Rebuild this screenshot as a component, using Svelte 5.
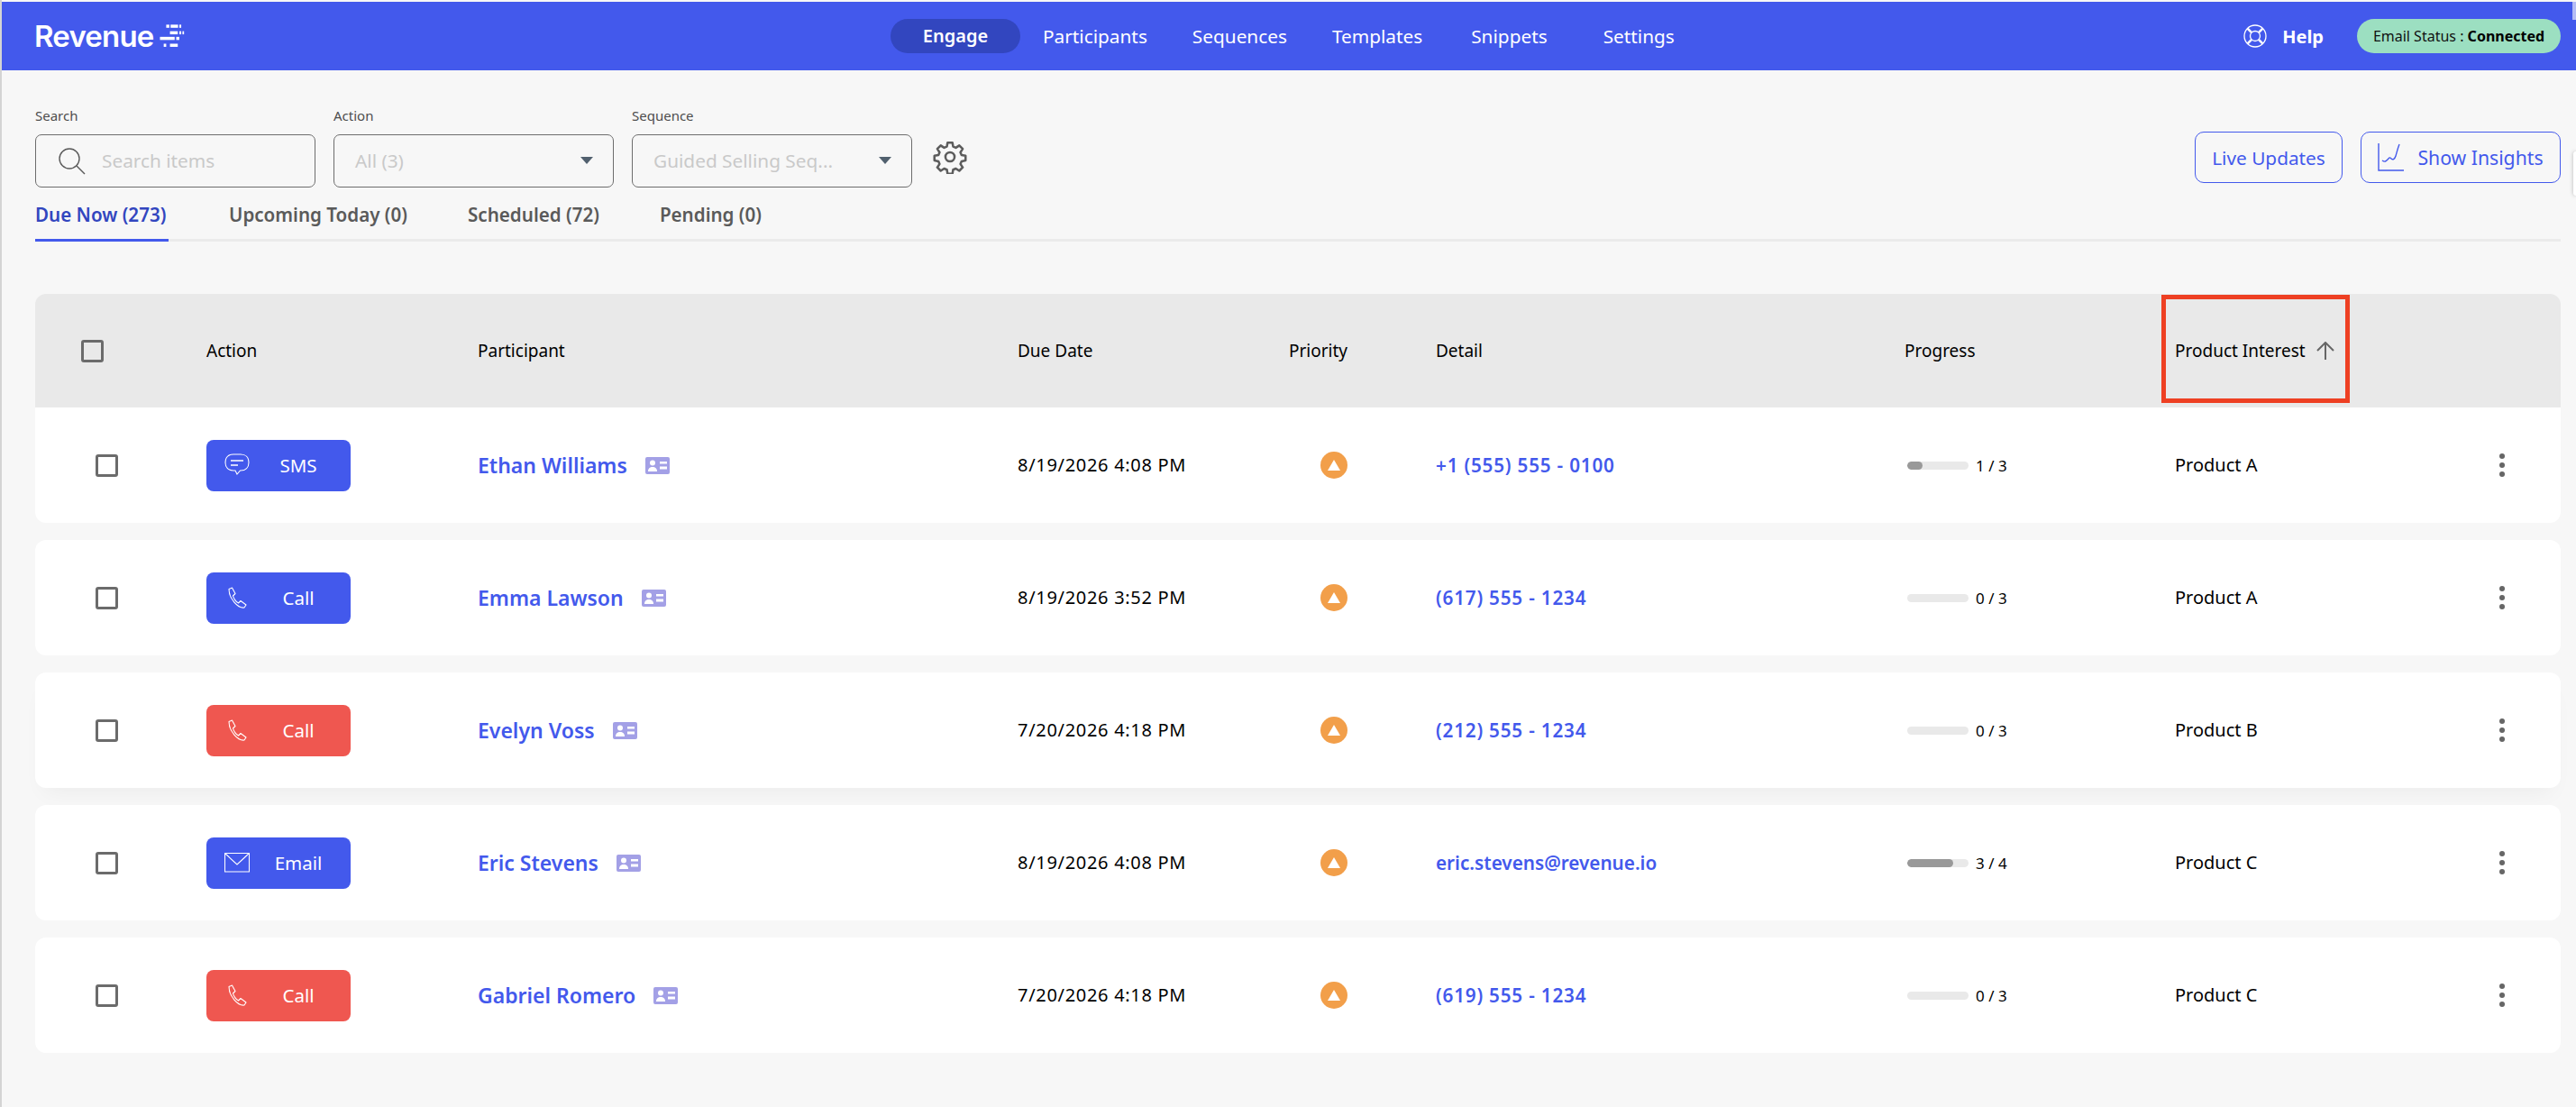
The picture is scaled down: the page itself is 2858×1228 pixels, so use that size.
<script>
  const tabs = [
    { label: 'Due Now (273)', active: true },
    { label: 'Upcoming Today (0)' },
    { label: 'Scheduled (72)' },
    { label: 'Pending (0)' }
  ];
  const nav = ['Engage', 'Participants', 'Sequences', 'Templates', 'Snippets', 'Settings'];
  const rows = [
    { kind: 'sms', label: 'SMS', tone: 'blue', name: 'Ethan Williams', due: '8/19/2026 4:08 PM', detail: '+1 (555) 555 - 0100', phone: true, pct: 25, prog: '1 / 3', product: 'Product A' },
    { kind: 'call', label: 'Call', tone: 'blue', name: 'Emma Lawson', due: '8/19/2026 3:52 PM', detail: '(617) 555 - 1234', phone: true, pct: 0, prog: '0 / 3', product: 'Product A' },
    { kind: 'call', label: 'Call', tone: 'red', name: 'Evelyn Voss', due: '7/20/2026 4:18 PM', detail: '(212) 555 - 1234', phone: true, pct: 0, prog: '0 / 3', product: 'Product B', shadow: true },
    { kind: 'email', label: 'Email', tone: 'blue', name: 'Eric Stevens', due: '8/19/2026 4:08 PM', detail: 'eric.stevens@revenue.io', pct: 75, prog: '3 / 4', product: 'Product C' },
    { kind: 'call', label: 'Call', tone: 'red', name: 'Gabriel Romero', due: '7/20/2026 4:18 PM', detail: '(619) 555 - 1234', phone: true, pct: 0, prog: '0 / 3', product: 'Product C' }
  ];
</script>

<div class="page">
  <header class="topbar">
    <div class="brand">
      <span class="logo-text">Revenue</span>
      <svg class="logo-mark" viewBox="0 0 78 75" width="28" height="26" fill="#fff">
        <rect x="20" y="1" width="10" height="10" /><rect x="34" y="1" width="24" height="10" /><rect x="62" y="1" width="6" height="10" />
        <rect x="32" y="22" width="25" height="10" /><rect x="62" y="22" width="6" height="10" /><rect x="72" y="22" width="5" height="10" />
        <rect x="0" y="40" width="47" height="10" /><rect x="52" y="40" width="10" height="10" />
        <rect x="12" y="62" width="8" height="10" /><rect x="32" y="62" width="25" height="10" />
      </svg>
    </div>
    <nav class="mainnav">
      {#each nav as item, i}
        <span class="navitem" class:current={i === 0}>{item}</span>
      {/each}
    </nav>
    <div class="topright">
      <svg class="help-icon" viewBox="0 0 26 26" width="26" height="26" fill="none" stroke="#fff" stroke-width="1.3">
        <circle cx="13" cy="13" r="12" /><circle cx="13" cy="13" r="5.5" />
        <path d="M4.6 4.6l4.5 4.5M21.4 4.6l-4.5 4.5M4.6 21.4l4.5-4.5M21.4 21.4l-4.5-4.5" stroke-width="2.6" />
      </svg>
      <span class="help">Help</span>
      <span class="status">Email Status : <b>Connected</b></span>
    </div>
    <span class="edge-top"></span>
  </header>

  <main class="content">
    <section class="filters">
      <div class="field">
        <label>Search</label>
        <div class="box search">
          <svg viewBox="0 0 32 32" width="32" height="32" fill="none" stroke="#5a5a5a" stroke-width="1.4">
            <circle cx="13" cy="13" r="11" /><path d="M21 21l9 9" />
          </svg>
          <span class="ph">Search items</span>
        </div>
      </div>
      <div class="field">
        <label>Action</label>
        <div class="box select"><span class="ph">All (3)</span><i class="caret"></i></div>
      </div>
      <div class="field">
        <label>Sequence</label>
        <div class="box select"><span class="ph">Guided Selling Seq...</span><i class="caret"></i></div>
      </div>
      <svg class="gear" viewBox="0 0 24 24" width="38" height="38" fill="none" stroke="#5c5c5c" stroke-width="1.6" stroke-linejoin="round">
        <circle cx="12" cy="12" r="3.2" />
        <path d="M10.3 2h3.4l.5 2.8 1.9.8 2.4-1.6 2.4 2.4-1.6 2.400.8 1.900 2.800.5v3.400l-2.800.5-.8 1.900 1.600 2.400-2.400 2.400-2.400-1.600-1.900.8-.5 2.800h-3.400l-.5-2.800-1.900-.8-2.400 1.600-2.400-2.400 1.600-2.400-.8-1.900-2.800-.5v-3.400l2.800-.5.8-1.900L3.100 6.400l2.400-2.400 2.400 1.600 1.900-.8z" />
      </svg>
      <div class="actions">
        <button class="outline live">Live Updates</button>
        <button class="outline insights">
          <svg viewBox="0 0 29 31" width="29" height="31" fill="none" stroke="#4359ec" stroke-width="1.4">
            <path d="M1 0v30h28" /><path d="M5 19c3 2 4 1 6-1s2-3 4-1 4 0 5-3 2-8 4-13" />
          </svg>
          Show Insights
        </button>
      </div>
      <span class="edge-tab"></span>
    </section>

    <section class="tabs">
      {#each tabs as t}
        <span class="tab" class:active={t.active}>{t.label}</span>
      {/each}
    </section>

    <section class="table">
      <div class="row head">
        <div class="c-check head-check"><span class="cb"></span></div>
        <div class="c-action">Action</div>
        <div class="c-part">Participant</div>
        <div class="c-due">Due Date</div>
        <div class="c-prio">Priority</div>
        <div class="c-detail">Detail</div>
        <div class="c-prog">Progress</div>
        <div class="c-prod head-prod">
          Product Interest
          <svg viewBox="0 0 20 20" width="20" height="20" fill="none" stroke="#666" stroke-width="2"><path d="M10 20V2M1 10l9-9 9 9" /></svg>
          <span class="redbox"></span>
        </div>
      </div>
      {#each rows as r}
        <div class="row item" class:shadow={r.shadow}>
          <div class="c-check"><span class="cb"></span></div>
          <div class="c-action">
            <span class="btn {r.tone}">
              <span class="btn-icon">
                {#if r.kind === 'sms'}
                  <svg viewBox="0 0 28 26" width="28" height="26" fill="none" stroke="#fff" stroke-width="1.1">
                    <path d="M10 1h8c5.500 0 9 3.500 9 9s-3.500 9-9 9h-.5L14 23l-2-4h-2c-5.500 0-9-3.500-9-9s3.500-9 9-9z" />
                    <path d="M7 8h14M7 13h8" stroke-width="1.7" />
                  </svg>
                {:else if r.kind === 'call'}
                  <svg viewBox="0 0 24 24" width="24" height="24" fill="none" stroke="#fff" stroke-width="1.1" stroke-linejoin="round">
                    <path d="M3 2.500 6.500 1l3.500 6.500L7.500 10c.5 2.500 3.500 7 6 8l2.500-2.500 6 4.500L20 23C13 24 3 13 3 2.500z" />
                  </svg>
                {:else}
                  <svg viewBox="0 0 28 22" width="28" height="22" fill="none" stroke="#fff" stroke-width="1.1">
                    <path d="M.5.500h27v20.500H.5zM.5.500 14 13 27.500.500" />
                  </svg>
                {/if}
              </span>
              <span class="btn-label">{r.label}</span>
            </span>
          </div>
          <div class="c-part name">
            <span>{r.name}</span>
            <svg class="card" viewBox="0 0 27 19" width="27" height="19">
              <rect width="27" height="19" rx="2" fill="#a3a0e6" />
              <circle cx="8" cy="6.500" r="3" fill="#fff" /><path d="M3 16c0-3.500 2-5 5-5s5 1.500 5 5z" fill="#fff" />
              <rect x="16" y="5" width="8" height="2.500" fill="#fff" /><rect x="16" y="10.500" width="8" height="3" fill="#fff" />
            </svg>
          </div>
          <div class="c-due date">{r.due}</div>
          <div class="c-prio">
            <span class="prio"><i></i></span>
          </div>
          <div class="c-detail link" class:phone={r.phone}>{r.detail}</div>
          <div class="c-prog progress">
            <span class="bar"><span class="fill" style="width: {r.pct}%"></span></span>
            <span class="frac">{r.prog}</span>
          </div>
          <div class="c-prod product">{r.product}</div>
          <div class="c-more"><i></i><i></i><i></i></div>
        </div>
      {/each}
    </section>
  </main>
</div>

<style>
  :global(body) {
    margin: 0;
    background: #f7f7f7;
  }
  .page {
    height: 1228px;
    box-sizing: border-box;
    border-left: 2px solid #d4d4d4;
    overflow: hidden;
    font-family: "Noto Sans", sans-serif;
    color: #000;
    background: #f7f7f7;
  }
  .topbar {
    height: 76px;
    margin-top: 2px;
    margin-left: -2px;
    background: #4359ec;
    display: flex;
    align-items: center;
    position: relative;
  }
  .edge-top {
    position: absolute;
    right: 0;
    top: 0;
    width: 4px;
    height: 20px;
    background: #b4bcf5;
  }
  .brand {
    display: flex;
    align-items: center;
    margin-left: 38px;
    gap: 6px;
    color: #fff;
  }
  .logo-text {
    font-family: "Inter", sans-serif;
    font-size: 33px;
    font-weight: 600;
    letter-spacing: -0.8px;
  }
  .mainnav {
    position: absolute;
    left: 988px;
    top: 19px;
    display: flex;
    align-items: center;
    color: #fff;
    font-size: 20.800px;
  }
  .navitem {
    height: 38px;
    line-height: 38px;
    padding: 0 25px;
    border-radius: 19px;
  }
  .navitem:nth-child(5) {
    margin-left: 4px;
  }
  .navitem:nth-child(6) {
    margin-left: 12px;
  }
  .navitem.current {
    background: #3246bf;
    font-weight: 600;
    font-size: 20px;
    width: 144px;
    padding: 0;
    box-sizing: border-box;
    text-align: center;
  }
  .topright {
    margin-left: auto;
    margin-right: 17px;
    display: flex;
    align-items: center;
    color: #fff;
  }
  .help {
    margin-left: 17px;
    font-size: 20px;
    font-weight: 700;
  }
  .status {
    margin-left: 37px;
    width: 226px;
    height: 38px;
    line-height: 38px;
    text-align: center;
    border-radius: 19px;
    background: #9cdfc1;
    color: #111;
    font-size: 16px;
  }
  .status b {
    font-weight: 700;
    color: #000;
  }
  .content {
    padding: 0 17px 0 37px;
  }
  .filters {
    display: flex;
    align-items: flex-end;
    padding-top: 40px;
    position: relative;
  }
  .edge-tab {
    position: absolute;
    right: -17px;
    top: 90px;
    width: 3px;
    height: 49px;
    background: #fff;
    border-radius: 6px 0 0 6px;
    box-shadow: 0 0 4px rgba(0, 0, 0, 0.3);
  }
  .field {
    width: 311px;
    margin-right: 20px;
  }
  .field label {
    display: block;
    font-size: 15px;
    line-height: 20px;
    color: #4e4e4e;
    margin-bottom: 11px;
  }
  .box {
    height: 59px;
    box-sizing: border-box;
    border: 1.5px solid #6d6d6d;
    border-radius: 7px;
    display: flex;
    align-items: center;
    position: relative;
    padding-left: 23px;
  }
  .box.search {
    gap: 17px;
    padding-left: 24px;
  }
  .ph {
    font-size: 20.800px;
    color: #c9c9c9;
    margin-top: -2px;
  }
  .caret {
    position: absolute;
    right: 22px;
    top: 24px;
    width: 0;
    height: 0;
    border-left: 7px solid transparent;
    border-right: 7px solid transparent;
    border-top: 8px solid #51606e;
  }
  .gear {
    margin: 0 0 15px 3px;
  }
  .actions {
    margin-left: auto;
    display: flex;
    gap: 20px;
    align-self: flex-end;
    margin-bottom: 5px;
  }
  .outline {
    height: 57px;
    box-sizing: border-box;
    border: 1.5px solid #4359ec;
    border-radius: 10px;
    background: transparent;
    color: #4359ec;
    font: 400 20.800px "Noto Sans", sans-serif;
    display: flex;
    align-items: center;
    justify-content: center;
    padding: 0;
  }
  .outline.live { width: 164px; }
  .outline.insights { width: 222px; gap: 15px; font-size: 21.200px; }
  .tabs {
    display: flex;
    gap: 67px;
    margin-top: 10px;
    height: 50px;
    box-sizing: border-box;
    border-bottom: 3px solid #ebebeb;
    font-size: 20.600px;
    font-weight: 600;
    color: #5a5a5a;
  }
  .tab {
    height: 50px;
    box-sizing: border-box;
    line-height: 40px;
  }
  .tab.active {
    color: #3246bf;
    border-bottom: 3px solid #4359ec;
    min-width: 148px;
  }
  .table {
    margin-top: 58px;
    display: flex;
    flex-direction: column;
    gap: 19px;
  }
  .row {
    display: grid;
    grid-template-columns: 190px 301px 599px 301px 163px 520px 300px 1fr 69px;
    align-items: center;
    font-size: 19px;
    background: #fff;
    height: 128px;
    border-radius: 12px;
  }
  .row.shadow {
    box-shadow: 0 14px 24px -10px rgba(0, 0, 0, 0.05);
  }
  .row.head {
    height: 126px;
    margin-bottom: -19px;
    border-radius: 12px 12px 0 0;
    background: #e9e9e9;
  }
  .item:nth-child(2) {
    border-radius: 0 0 12px 12px;
  }
  .date {
    font-size: 20px;
    letter-spacing: 0.7px;
    margin-top: -1px;
  }
  .product {
    font-size: 20px;
    margin-top: -2px;
  }
  .c-check {
    padding-left: 67px;
    display: flex;
  }
  .head-check {
    padding-left: 51px;
  }
  .cb {
    width: 25px;
    height: 25px;
    box-sizing: border-box;
    border: 3px solid #6b6b6b;
    border-radius: 3px;
    display: block;
  }
  .btn {
    width: 160px;
    height: 57px;
    border-radius: 8px;
    display: flex;
    align-items: center;
    color: #fff;
    font-size: 20.500px;
    position: relative;
  }
  .btn.blue { background: #4359ec; }
  .btn.red { background: #ef5750; }
  .btn-icon {
    width: 28px;
    margin-left: 20px;
    display: flex;
    justify-content: center;
  }
  .btn-label {
    position: absolute;
    left: 44px;
    right: 0;
    text-align: center;
  }
  .name {
    display: flex;
    align-items: center;
    gap: 20px;
    color: #4359ec;
    font-weight: 600;
    font-size: 23px;
  }
  .prio {
    width: 30px;
    height: 30px;
    margin-left: 35px;
    border-radius: 50%;
    background: #f29f4a;
    display: flex;
    align-items: center;
    justify-content: center;
  }
  .prio i {
    width: 0;
    height: 0;
    border-left: 7px solid transparent;
    border-right: 7px solid transparent;
    border-bottom: 12px solid #fff;
  }
  .link {
    color: #4359ec;
    font-weight: 600;
    font-size: 20.700px;
  }
  .link.phone {
    letter-spacing: 0.8px;
  }
  .progress {
    display: flex;
    align-items: center;
    gap: 8px;
    padding-left: 3px;
    font-size: 17px;
  }
  .bar {
    width: 68px;
    height: 9px;
    border-radius: 5px;
    background: #e9e9e9;
    display: block;
    overflow: hidden;
  }
  .fill {
    display: block;
    height: 100%;
    border-radius: 5px;
    background: #999;
  }
  .head-prod {
    position: relative;
    display: flex;
    align-items: center;
    gap: 12px;
  }
  .redbox {
    position: absolute;
    left: -15px;
    top: -49px;
    width: 209px;
    height: 120px;
    box-sizing: border-box;
    border: 5px solid #ee4023;
  }
  .c-more {
    display: flex;
    flex-direction: column;
    align-items: center;
    gap: 4px;
    width: 8px;
  }
  .c-more i {
    width: 6px;
    height: 6px;
    border-radius: 50%;
    background: #666;
  }
</style>
